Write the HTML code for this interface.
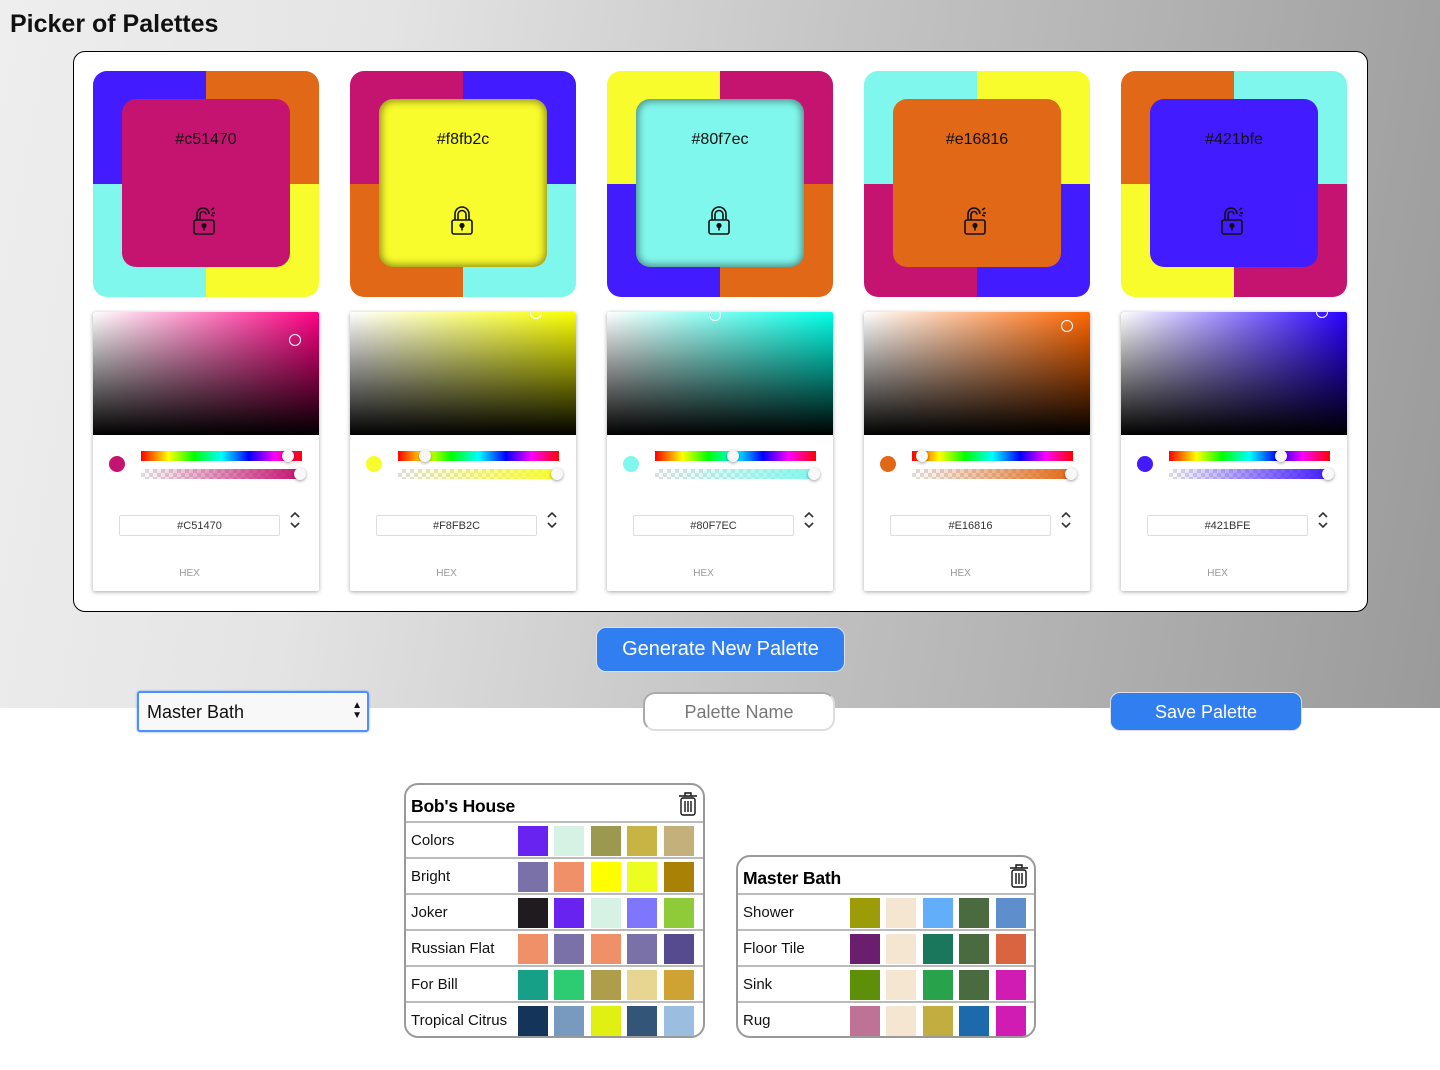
<!DOCTYPE html>
<html><head><meta charset="utf-8">
<style>
*{box-sizing:border-box;margin:0;padding:0}
body{width:1440px;height:1070px;position:relative;background:#fff;font-family:"Liberation Sans",sans-serif;overflow:hidden}
.bg{position:absolute;left:0;top:0;width:1440px;height:708px;background:linear-gradient(100deg,#eeeeee 0%,#e4e4e4 25%,#c4c4c4 55%,#9a9a9a 100%)}
h1{position:absolute;left:10px;top:10px;font-size:25px;font-weight:bold;color:#111}
.panel{position:absolute;left:73px;top:51px;width:1295px;height:561px;background:#fff;border:1px solid #000;border-radius:12px}
.card{position:absolute;top:71px;width:226px}
.sw{position:absolute;left:0;top:0;width:226px;height:226px;border-radius:14px;overflow:hidden}
.q{position:absolute;width:113px;height:113px}
.in{position:absolute;left:29px;top:28px;width:168px;height:168px;border-radius:14px;text-align:center;font-size:16px;color:#111;padding-top:32px}
.in.lk{box-shadow:inset 0 0 8px 2px rgba(0,0,0,.45)}
.in svg{position:absolute;left:70px;top:106px}
.pk{position:absolute;left:0;top:241px;width:226px;height:279px;background:#fff;box-shadow:0 1px 4px rgba(0,0,0,.35);border-radius:2px;overflow:hidden}
.sat{position:absolute;left:0;top:0;width:226px;height:123px}
.sat .w{position:absolute;inset:0;background:linear-gradient(to right,#fff,rgba(255,255,255,0))}
.sat .b{position:absolute;inset:0;background:linear-gradient(to top,#000,rgba(0,0,0,0))}
.ring{position:absolute;width:12px;height:12px;border:1.5px solid #fff;border-radius:50%;margin:-6px 0 0 -6px}
.dot{position:absolute;left:16px;top:144px;width:16px;height:16px;border-radius:50%}
.hue{position:absolute;left:48px;top:139px;width:161px;height:10px;background:linear-gradient(to right,#f00,#ff0 17%,#0f0 33%,#0ff 50%,#00f 67%,#f0f 83%,#f00)}
.alp{position:absolute;left:48px;top:157px;width:161px;height:10px;background-image:linear-gradient(45deg,#ddd 25%,transparent 25%,transparent 75%,#ddd 75%),linear-gradient(45deg,#ddd 25%,transparent 25%,transparent 75%,#ddd 75%);background-size:8px 8px;background-position:0 0,4px 4px}
.alp i{position:absolute;inset:0}
.h{position:absolute;width:12px;height:12px;border-radius:50%;background:#f8f8f8;box-shadow:0 1px 3px rgba(0,0,0,.4);margin-left:-6px}
.inp{position:absolute;left:26px;top:203px;width:161px;height:21px;border:1px solid #ddd;border-radius:2px;font-size:11px;color:#333;text-align:center;line-height:21px}
.arr{position:absolute;left:196px;top:198px}
.hex{position:absolute;left:0;width:193px;top:256px;text-align:center;font-size:10px;color:#999}
.btn{position:absolute;background:#307ef0;color:#fff;border-radius:10px;text-align:center;border:1px solid #e0e0e0}
.sel{position:absolute;left:137px;top:691px;width:232px;height:41px;border:2px solid #4d90fe;border-radius:3px;background:#f8f8f8;font-size:18px;padding:9px 0 0 8px;color:#111;box-shadow:0 0 2px #7aa7f6}
.name{position:absolute;left:643px;top:692px;width:192px;height:39px;border:2px solid #aaa;border-right-color:#ddd;border-bottom-color:#ddd;border-radius:12px;background:#fff;color:#777;font-size:18px;text-align:center;line-height:37px}
.tbl{position:absolute;border:2px solid #999;border-radius:14px;background:#fff;overflow:hidden}
.tbl .t{height:38px;font-size:17.5px;font-weight:bold;padding:11px 0 0 5px;border-bottom:2px solid #bbb;position:relative;color:#000;letter-spacing:-0.2px}
.tbl .t svg{position:absolute;right:4px;top:6px}
.row{height:36px;border-bottom:2px solid #bbb;position:relative;font-size:15px;color:#111}
.row:last-child{border-bottom:none}
.row span{position:absolute;left:5px;top:9px}
.row b{position:absolute;top:3px;width:30px;height:30px}
</style></head><body>
<div class="bg"></div>
<h1>Picker of Palettes</h1>
<div class="panel"></div>

<!-- card 1 -->
<div class="card" style="left:93px">
 <div class="sw">
  <div class="q" style="left:0;top:0;background:#421bfe"></div><div class="q" style="left:113px;top:0;background:#e16816"></div>
  <div class="q" style="left:0;top:113px;background:#80f7ec"></div><div class="q" style="left:113px;top:113px;background:#f8fb2c"></div>
  <div class="in" style="background:#c51470">#c51470
   <svg width="28" height="32" viewBox="0 0 28 32" fill="none" stroke="#111" stroke-width="1.6"><path d="M5 15V9a6 6 0 0 1 12 0"/><path d="M8 15V9.5a3 3 0 0 1 6 0"/><rect x="2" y="15" width="20" height="14" rx="2"/><circle cx="12" cy="20.5" r="1.8" fill="#111"/><path d="M12 22v3.5"/><path d="M19 5l3-2M20 8h3M19 10l3 1"/></svg></div>
 </div>
 <div class="pk">
  <div class="sat" style="background:#ff0084"><div class="w"></div><div class="b"></div><div class="ring" style="left:202px;top:28px"></div></div>
  <div class="dot" style="background:#c51470"></div>
  <div class="hue"></div><div class="h" style="left:195px;top:138px"></div>
  <div class="alp"><i style="background:linear-gradient(to right,rgba(197,20,112,0),#c51470)"></i></div><div class="h" style="left:207px;top:156px"></div>
  <div class="inp">#C51470</div><svg class="arr" width="12" height="20" viewBox="0 0 12 20" fill="none" stroke="#333" stroke-width="1.6"><path d="M2 7l4-4 4 4M2 13l4 4 4-4"/></svg>
  <div class="hex">HEX</div>
 </div>
</div>

<!-- card 2 -->
<div class="card" style="left:350px">
 <div class="sw">
  <div class="q" style="left:0;top:0;background:#c51470"></div><div class="q" style="left:113px;top:0;background:#421bfe"></div>
  <div class="q" style="left:0;top:113px;background:#e16816"></div><div class="q" style="left:113px;top:113px;background:#80f7ec"></div>
  <div class="in lk" style="background:#f8fb2c">#f8fb2c
   <svg width="28" height="32" viewBox="0 0 28 32" fill="none" stroke="#111" stroke-width="1.6"><path d="M6 15V9a7 7 0 0 1 14 0v6"/><path d="M9 15V9.5a4 4 0 0 1 8 0V15"/><rect x="3" y="15" width="20" height="14" rx="2"/><circle cx="13" cy="20.5" r="1.8" fill="#111"/><path d="M13 22v3.5"/></svg></div>
 </div>
 <div class="pk">
  <div class="sat" style="background:#faff00"><div class="w"></div><div class="b"></div><div class="ring" style="left:186px;top:1px"></div></div>
  <div class="dot" style="background:#f8fb2c"></div>
  <div class="hue"></div><div class="h" style="left:75px;top:138px"></div>
  <div class="alp"><i style="background:linear-gradient(to right,rgba(248,251,44,0),#f8fb2c)"></i></div><div class="h" style="left:207px;top:156px"></div>
  <div class="inp">#F8FB2C</div><svg class="arr" width="12" height="20" viewBox="0 0 12 20" fill="none" stroke="#333" stroke-width="1.6"><path d="M2 7l4-4 4 4M2 13l4 4 4-4"/></svg>
  <div class="hex">HEX</div>
 </div>
</div>

<!-- card 3 -->
<div class="card" style="left:607px">
 <div class="sw">
  <div class="q" style="left:0;top:0;background:#f8fb2c"></div><div class="q" style="left:113px;top:0;background:#c51470"></div>
  <div class="q" style="left:0;top:113px;background:#421bfe"></div><div class="q" style="left:113px;top:113px;background:#e16816"></div>
  <div class="in lk" style="background:#80f7ec">#80f7ec
   <svg width="28" height="32" viewBox="0 0 28 32" fill="none" stroke="#111" stroke-width="1.6"><path d="M6 15V9a7 7 0 0 1 14 0v6"/><path d="M9 15V9.5a4 4 0 0 1 8 0V15"/><rect x="3" y="15" width="20" height="14" rx="2"/><circle cx="13" cy="20.5" r="1.8" fill="#111"/><path d="M13 22v3.5"/></svg></div>
 </div>
 <div class="pk">
  <div class="sat" style="background:#00ffe6"><div class="w"></div><div class="b"></div><div class="ring" style="left:108px;top:3px"></div></div>
  <div class="dot" style="background:#80f7ec"></div>
  <div class="hue"></div><div class="h" style="left:126px;top:138px"></div>
  <div class="alp"><i style="background:linear-gradient(to right,rgba(128,247,236,0),#80f7ec)"></i></div><div class="h" style="left:207px;top:156px"></div>
  <div class="inp">#80F7EC</div><svg class="arr" width="12" height="20" viewBox="0 0 12 20" fill="none" stroke="#333" stroke-width="1.6"><path d="M2 7l4-4 4 4M2 13l4 4 4-4"/></svg>
  <div class="hex">HEX</div>
 </div>
</div>

<!-- card 4 -->
<div class="card" style="left:864px">
 <div class="sw">
  <div class="q" style="left:0;top:0;background:#80f7ec"></div><div class="q" style="left:113px;top:0;background:#f8fb2c"></div>
  <div class="q" style="left:0;top:113px;background:#c51470"></div><div class="q" style="left:113px;top:113px;background:#421bfe"></div>
  <div class="in" style="background:#e16816">#e16816
   <svg width="28" height="32" viewBox="0 0 28 32" fill="none" stroke="#111" stroke-width="1.6"><path d="M5 15V9a6 6 0 0 1 12 0"/><path d="M8 15V9.5a3 3 0 0 1 6 0"/><rect x="2" y="15" width="20" height="14" rx="2"/><circle cx="12" cy="20.5" r="1.8" fill="#111"/><path d="M12 22v3.5"/><path d="M19 5l3-2M20 8h3M19 10l3 1"/></svg></div>
 </div>
 <div class="pk">
  <div class="sat" style="background:#ff6600"><div class="w"></div><div class="b"></div><div class="ring" style="left:203px;top:14px"></div></div>
  <div class="dot" style="background:#e16816"></div>
  <div class="hue"></div><div class="h" style="left:58px;top:138px"></div>
  <div class="alp"><i style="background:linear-gradient(to right,rgba(225,104,22,0),#e16816)"></i></div><div class="h" style="left:207px;top:156px"></div>
  <div class="inp">#E16816</div><svg class="arr" width="12" height="20" viewBox="0 0 12 20" fill="none" stroke="#333" stroke-width="1.6"><path d="M2 7l4-4 4 4M2 13l4 4 4-4"/></svg>
  <div class="hex">HEX</div>
 </div>
</div>

<!-- card 5 -->
<div class="card" style="left:1121px">
 <div class="sw">
  <div class="q" style="left:0;top:0;background:#e16816"></div><div class="q" style="left:113px;top:0;background:#80f7ec"></div>
  <div class="q" style="left:0;top:113px;background:#f8fb2c"></div><div class="q" style="left:113px;top:113px;background:#c51470"></div>
  <div class="in" style="background:#421bfe">#421bfe
   <svg width="28" height="32" viewBox="0 0 28 32" fill="none" stroke="#111" stroke-width="1.6"><path d="M5 15V9a6 6 0 0 1 12 0"/><path d="M8 15V9.5a3 3 0 0 1 6 0"/><rect x="2" y="15" width="20" height="14" rx="2"/><circle cx="12" cy="20.5" r="1.8" fill="#111"/><path d="M12 22v3.5"/><path d="M19 5l3-2M20 8h3M19 10l3 1"/></svg></div>
 </div>
 <div class="pk">
  <div class="sat" style="background:#2a00ff"><div class="w"></div><div class="b"></div><div class="ring" style="left:201px;top:0px"></div></div>
  <div class="dot" style="background:#421bfe"></div>
  <div class="hue"></div><div class="h" style="left:160px;top:138px"></div>
  <div class="alp"><i style="background:linear-gradient(to right,rgba(66,27,254,0),#421bfe)"></i></div><div class="h" style="left:207px;top:156px"></div>
  <div class="inp">#421BFE</div><svg class="arr" width="12" height="20" viewBox="0 0 12 20" fill="none" stroke="#333" stroke-width="1.6"><path d="M2 7l4-4 4 4M2 13l4 4 4-4"/></svg>
  <div class="hex">HEX</div>
 </div>
</div>

<div class="btn" style="left:596px;top:627px;width:249px;height:45px;font-size:20px;line-height:43px">Generate New Palette</div>
<div class="sel">Master Bath<span style="position:absolute;right:5px;top:8px;font-size:10px;line-height:10px">&#9650;<br>&#9660;</span></div>
<div class="name">Palette Name</div>
<div class="btn" style="left:1110px;top:692px;width:192px;height:39px;font-size:18px;line-height:39px">Save Palette</div>

<div class="tbl" style="left:404px;top:783px;width:301px;height:255px">
 <div class="t">Bob's House<svg width="22" height="26" viewBox="0 0 22 26" fill="none" stroke="#111" stroke-width="1.4"><path d="M2 5h18M8 5V2h6v3"/><rect x="4" y="7" width="14" height="17" rx="2"/><path d="M8 10v11M11 10v11M14 10v11"/></svg></div>
 <div class="row"><span>Colors</span><b style="left:112px;background:#6823f0"></b><b style="left:148px;background:#d6f2e4"></b><b style="left:185px;background:#9b984f"></b><b style="left:221px;background:#c7b445"></b><b style="left:258px;background:#c4b07b"></b></div>
 <div class="row"><span>Bright</span><b style="left:112px;background:#7a71a8"></b><b style="left:148px;background:#f09068"></b><b style="left:185px;background:#ffff00"></b><b style="left:221px;background:#ecfd22"></b><b style="left:258px;background:#a98104"></b></div>
 <div class="row"><span>Joker</span><b style="left:112px;background:#201b1f"></b><b style="left:148px;background:#6823f0"></b><b style="left:185px;background:#d6f2e4"></b><b style="left:221px;background:#7e77fd"></b><b style="left:258px;background:#8fca39"></b></div>
 <div class="row"><span>Russian Flat</span><b style="left:112px;background:#f09068"></b><b style="left:148px;background:#7a71a8"></b><b style="left:185px;background:#f09068"></b><b style="left:221px;background:#7a71a8"></b><b style="left:258px;background:#564b8f"></b></div>
 <div class="row"><span>For Bill</span><b style="left:112px;background:#16a088"></b><b style="left:148px;background:#2ecc72"></b><b style="left:185px;background:#ae9e4c"></b><b style="left:221px;background:#e7d592"></b><b style="left:258px;background:#cea233"></b></div>
 <div class="row"><span>Tropical Citrus</span><b style="left:112px;background:#14345a"></b><b style="left:148px;background:#789abf"></b><b style="left:185px;background:#e0f012"></b><b style="left:221px;background:#335678"></b><b style="left:258px;background:#9bbde0"></b></div>
</div>

<div class="tbl" style="left:736px;top:855px;width:300px;height:183px">
 <div class="t">Master Bath<svg width="22" height="26" viewBox="0 0 22 26" fill="none" stroke="#111" stroke-width="1.4"><path d="M2 5h18M8 5V2h6v3"/><rect x="4" y="7" width="14" height="17" rx="2"/><path d="M8 10v11M11 10v11M14 10v11"/></svg></div>
 <div class="row"><span>Shower</span><b style="left:112px;background:#9c9c09"></b><b style="left:148px;background:#f5e6d1"></b><b style="left:185px;background:#63aefa"></b><b style="left:221px;background:#4a6b40"></b><b style="left:258px;background:#5e8ecb"></b></div>
 <div class="row"><span>Floor Tile</span><b style="left:112px;background:#6c1e6e"></b><b style="left:148px;background:#f5e6d1"></b><b style="left:185px;background:#1b775c"></b><b style="left:221px;background:#4a6b40"></b><b style="left:258px;background:#d96440"></b></div>
 <div class="row"><span>Sink</span><b style="left:112px;background:#5e8f09"></b><b style="left:148px;background:#f5e6d1"></b><b style="left:185px;background:#28a34b"></b><b style="left:221px;background:#4a6b40"></b><b style="left:258px;background:#d11cb4"></b></div>
 <div class="row"><span>Rug</span><b style="left:112px;background:#bd7296"></b><b style="left:148px;background:#f5e6d1"></b><b style="left:185px;background:#c2ae40"></b><b style="left:221px;background:#1c6aac"></b><b style="left:258px;background:#d11cb4"></b></div>
</div>
</body></html>
